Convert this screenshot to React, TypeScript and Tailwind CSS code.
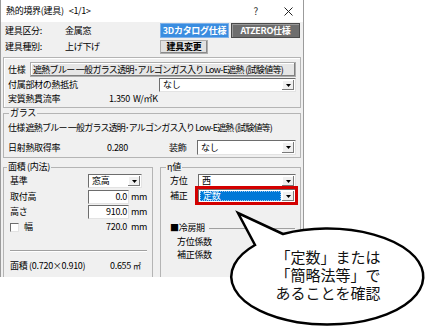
import React from "react";

function Arrow() {
  return (
    <span className="flex h-full w-[12px] shrink-0 items-center justify-center bg-[#f0f0f0] shadow-[inset_-1px_-1px_0_#7a7a7a,inset_1px_1px_0_#ffffff]">
      <svg width="5" height="3" viewBox="0 0 5 3">
        <path d="M0 0H5L2.5 3Z" fill="#000" />
      </svg>
    </span>
  );
}

function Select({ text, className, hl }: { text: string; className: string; hl?: boolean }) {
  return (
    <div
      className={
        "flex h-[14px] items-stretch border border-t-[#6d6d6d] border-l-[#6d6d6d] border-r-[#e3e3e3] border-b-[#e3e3e3] bg-white p-[1px] " +
        className
      }
    >
      {hl ? (
        <span className="mr-[1px] flex flex-1 items-center bg-[#0078d7] pl-[3px] leading-[10px] text-white outline-1 -outline-offset-1 outline-dotted outline-[#9cc8f0]">
          {text}
        </span>
      ) : (
        <span className="flex flex-1 items-center pl-[2px] leading-[10px]">{text}</span>
      )}
      <Arrow />
    </div>
  );
}

function Input({ text }: { text: string }) {
  return (
    <div className="flex h-[14px] w-[41px] items-center justify-end border border-t-[#6d6d6d] border-l-[#6d6d6d] border-r-[#e3e3e3] border-b-[#e3e3e3] bg-white pr-[1px] leading-[10px]">
      {text}
    </div>
  );
}

export default function App() {
  return (
    <div className="relative h-[330px] w-[431px] overflow-hidden bg-white font-['Noto_Sans_CJK_JP',sans-serif] text-[9px] tracking-[-0.3px] text-black">
      <div className="flex h-[277px] w-[304px] flex-col overflow-hidden border-x border-[#9b9b9b]">
        {/* title bar */}
        <div className="flex h-[22px] shrink-0 items-center bg-white pl-[5px] leading-[10px]">
          <span>熱的境界(建具)</span>
          <span className="ml-[5px]">&lt;1/1&gt;</span>
          <span className="ml-auto text-[10px] text-[#333]">?</span>
          <svg className="ml-[26px] mr-[10px]" width="9" height="9" viewBox="0 0 9 9">
            <path d="M0.5 0.5L8.5 8.5M8.5 0.5L0.5 8.5" stroke="#222" strokeWidth="1" />
          </svg>
        </div>

        {/* body */}
        <div className="flex flex-1 flex-col bg-[#f0f0f0] pt-[1px]">
          {/* row 1 */}
          <div className="flex h-[15px] items-center leading-[10px]">
            <span className="w-[64px] pl-[4px]">建具区分:</span>
            <span className="w-[95px]">金属窓</span>
            <span className="flex h-full w-[69px] items-center justify-center border border-[#7fb2ea] bg-[#3a8de0] font-bold text-white">
              3Dカタログ仕様
            </span>
            <span className="ml-[2px] flex h-full w-[69px] items-center justify-center border border-[#4a4a4a] bg-[#6e6e6e] font-bold text-white shadow-[inset_1px_1px_0_#9a9a9a]">
              ATZERO仕様
            </span>
          </div>
          {/* row 2 */}
          <div className="mt-[2px] flex h-[14px] items-center leading-[10px]">
            <span className="w-[64px] pl-[4px]">建具種別:</span>
            <span className="w-[95px]">上げ下げ</span>
            <span className="flex h-full w-[48px] items-center justify-center border border-[#adadad] bg-[#e1e1e1] font-bold shadow-[inset_-1px_-1px_0_#8a8a8a]">
              建具変更
            </span>
          </div>

          {/* group 1 */}
          <div className="ml-[2px] mt-[3px] flex w-[298px] flex-col border border-[#b4b4b4] px-[4px] pb-[1px] pt-[4px] shadow-[inset_1px_1px_0_#ffffff]">
            <div className="flex h-[15px] items-center leading-[10px]">
              <span className="w-[22px]">仕様</span>
              <span className="flex h-full min-w-0 flex-1 items-center overflow-hidden whitespace-nowrap border border-[#adadad] bg-[#e6e6e6] pl-[2px] tracking-[-0.7px] shadow-[inset_-1px_-1px_0_#808080,inset_1px_1px_0_#ffffff]">
                遮熱ブルー 一般ガラス透明･アルゴンガス入り Low-E遮熱 (試験値等)
              </span>
            </div>
            <div className="mt-[1px] flex h-[14px] items-center leading-[10px]">
              <span className="w-[151px]">付属部材の熱抵抗</span>
              <Select text="なし" className="flex-1" />
            </div>
            <div className="flex h-[14px] items-center leading-[10px]">
              <span className="w-[101px]">実質熱貫流率</span>
              <span className="w-[24px]">1.350</span>
              <span>W/㎡K</span>
            </div>
          </div>

          {/* group 2 */}
          <fieldset className="ml-[2px] flex w-[298px] flex-col border border-[#b4b4b4] px-[4px] pb-[2px]">
            <legend className="ml-[1px] px-[1px] leading-[10px]">ガラス</legend>
            <div className="mt-[4px] flex h-[12px] items-center whitespace-nowrap leading-[10px] tracking-[-0.8px]">
              仕様 遮熱ブルー 一般ガラス透明･アルゴンガス入り Low-E遮熱 (試験値等)
            </div>
            <div className="mt-[6px] flex h-[15px] items-center leading-[10px]">
              <span className="w-[99px]">日射熱取得率</span>
              <span className="w-[62px]">0.280</span>
              <span className="w-[28px]">装飾</span>
              <Select text="なし" className="h-[15px] flex-1" />
            </div>
          </fieldset>

          {/* group 3 */}
          <div className="mt-[4px] flex flex-1 items-stretch">
            <fieldset className="-mb-[10px] ml-[2px] flex w-[150px] flex-col border border-[#b4b4b4] pl-[6px] pr-[4px]">
              <legend className="-ml-[3px] px-[1px] leading-[10px]">面積 (内法)</legend>
              <div className="mt-[2px] flex h-[14px] items-center leading-[10px]">
                <span className="w-[78px]">基準</span>
                <Select text="窓高" className="w-[54px]" />
              </div>
              <div className="mt-[2px] flex h-[14px] items-center leading-[10px]">
                <span className="w-[78px]">取付高</span>
                <Input text="0.0" />
                <span className="ml-[2px]">mm</span>
              </div>
              <div className="mt-[1px] flex h-[14px] items-center leading-[10px]">
                <span className="w-[78px]">高さ</span>
                <Input text="910.0" />
                <span className="ml-[2px]">mm</span>
              </div>
              <div className="mt-[1px] flex h-[14px] items-center leading-[10px]">
                <span className="flex w-[78px] items-center">
                  <span className="h-[9px] w-[9px] border border-t-[#6d6d6d] border-l-[#6d6d6d] border-r-[#e3e3e3] border-b-[#e3e3e3] bg-white" />
                  <span className="ml-[5px]">幅</span>
                </span>
                <span className="w-[39px] text-right">720.0</span>
                <span className="ml-[4px]">mm</span>
              </div>
              <div className="mt-[16px] mr-[1px] border-t border-[#a0a0a0] shadow-[0_1px_0_#ffffff]" />
              <div className="mt-[9px] flex h-[12px] items-center leading-[10px]">
                <span className="w-[100px]">面積 (0.720×0.910)</span>
                <span className="w-[23px]">0.655</span>
                <span className="text-[8px]">㎡</span>
              </div>
            </fieldset>

            <fieldset className="-mb-[10px] ml-[7px] flex w-[141px] flex-col border border-[#b4b4b4] pl-[9px] pr-[3px]">
              <legend className="-ml-[4px] px-[1px] leading-[10px]">η値</legend>
              <div className="mt-[2px] flex h-[14px] items-center leading-[10px]">
                <span className="w-[28px]">方位</span>
                <Select text="西" className="w-[98px]" />
              </div>
              <div className="mt-[1px] flex h-[14px] items-center leading-[10px]">
                <span className="w-[28px]">補正</span>
                <div className="relative flex w-[98px]">
                  <Select text="定数" className="w-[98px]" hl />
                  <div className="pointer-events-none absolute -bottom-[2px] -left-[3px] -right-[2px] -top-[3px] border-[3px] border-[#d30000]" />
                </div>
              </div>
              <div className="mt-[19px] flex h-[12px] items-center leading-[10px]">
                <span>■冷房期</span>
                <span className="ml-[4px] mr-[2px] h-0 flex-1 border-t border-[#a0a0a0]" />
              </div>
              <div className="mt-[1px] flex h-[13px] items-center pl-[7px] leading-[10px]">方位係数</div>
              <div className="flex h-[13px] items-center pl-[7px] leading-[10px]">補正係数</div>
            </fieldset>
          </div>
        </div>
      </div>

      {/* speech bubble */}
      <svg className="pointer-events-none absolute left-0 top-0" width="431" height="330" viewBox="0 0 431 330">
        <path
          d="M283 234 L238 213 L255 245 A96 48 0 1 0 283 234 Z"
          fill="#ffffff"
          stroke="#000000"
          strokeWidth="2.5"
          strokeLinejoin="miter"
        />
      </svg>
      <div className="absolute left-[248px] top-[248px] flex w-[160px] flex-col items-center text-[15px] tracking-normal text-[#111]">
        <div className="h-[18px] leading-[18px]">「定数」または</div>
        <div className="h-[18px] leading-[18px]">「簡略法等」で</div>
        <div className="h-[18px] leading-[18px]">あることを確認</div>
      </div>
    </div>
  );
}
